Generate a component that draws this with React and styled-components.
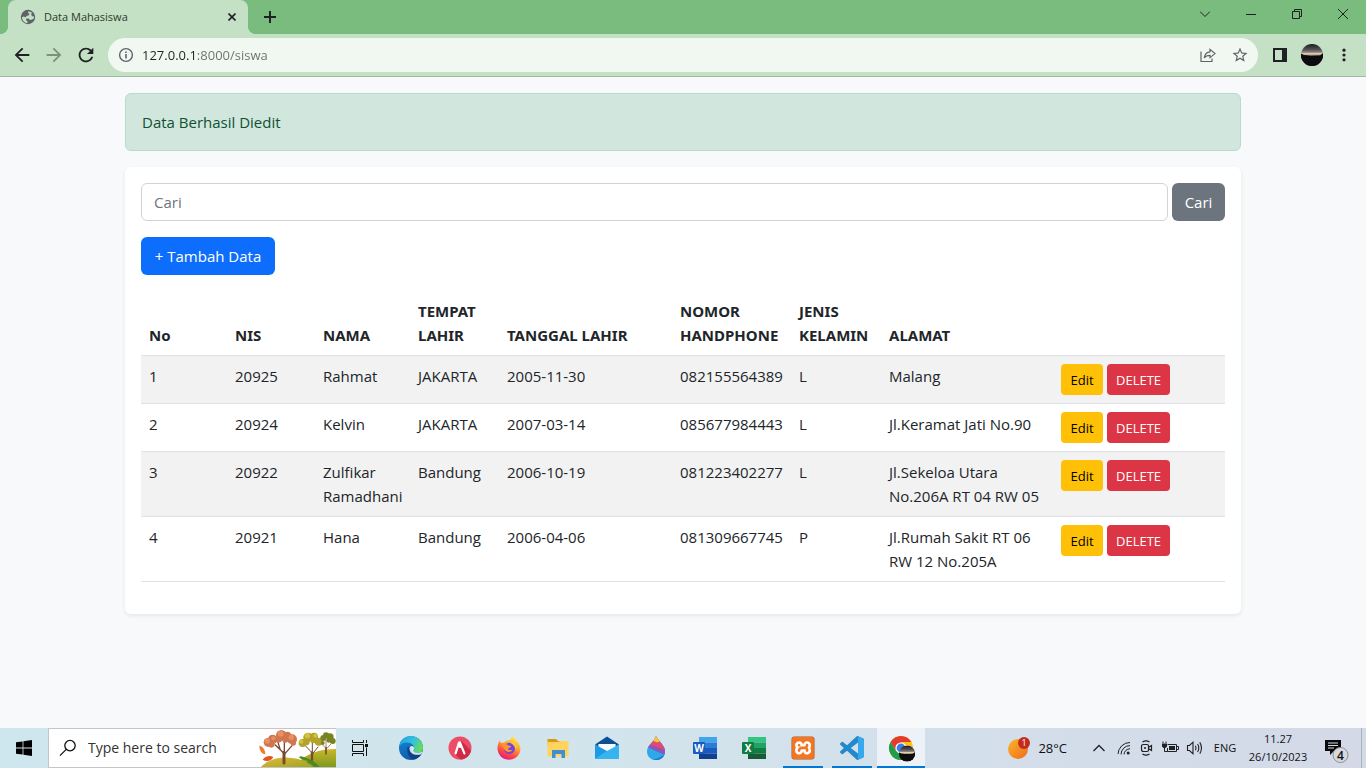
import React from "react";
import styled, { createGlobalStyle } from "styled-components";
import { SiXampp } from "react-icons/si";

const GlobalStyle = createGlobalStyle`
  *, *::before, *::after { box-sizing: border-box; }
  body {
    margin: 0;
    background: #f8f9fa;
    color: #212529;
    font-family: "Open Sans", "Noto Sans", sans-serif;
    font-size: 15px;
    line-height: 24px;
  }
  button, input { font: inherit; color: inherit; }
  button { cursor: pointer; }
  svg { display: block; flex: none; }
`;

/* ---------- shell ---------- */

const Screen = styled.div`
  display: flex;
  flex-direction: column;
  min-height: 100vh;
`;

const IconButton = styled.button`
  display: flex;
  align-items: center;
  justify-content: center;
  flex: none;
  width: ${(p) => p.$width || 32}px;
  height: ${(p) => p.$height || 34}px;
  padding: 0;
  border: 0;
  background: transparent;
  color: ${(p) => p.$color || "#202124"};
`;

/* ---------- browser frame ---------- */

const TabStrip = styled.div`
  display: flex;
  height: 34px;
  padding-left: 8px;
  background: #7abc7d;
`;

const Tab = styled.div`
  position: relative;
  display: flex;
  align-items: center;
  width: 240px;
  padding: 0 4px 0 12px;
  gap: 8px;
  border-radius: 8px 8px 0 0;
  background: #c5e1c5;
  color: #2b3a2c;
  font-size: 11px;
  line-height: 16px;

  &::before, &::after {
    content: "";
    position: absolute;
    bottom: 0;
    width: 8px;
    height: 8px;
  }
  &::before {
    left: -8px;
    background: radial-gradient(circle at 0 0, transparent 8px, #c5e1c5 8px);
  }
  &::after {
    right: -8px;
    background: radial-gradient(circle at 100% 0, transparent 8px, #c5e1c5 8px);
  }
`;

const TabTitle = styled.span`
  flex: 1;
`;

const NewTab = styled.div`
  flex: 1;
  padding-left: 8px;
`;

const Toolbar = styled.div`
  display: flex;
  align-items: center;
  height: 43px;
  padding: 0 6px;
  border-bottom: 1px solid #a3b9a4;
  background: #c5e1c5;
`;

const AddressBar = styled.div`
  display: flex;
  align-items: center;
  flex: 1;
  height: 34px;
  margin: 0 6px;
  padding: 0 2px;
  border-radius: 17px;
  background: #f1f8f2;
`;

const AddressInput = styled.input`
  flex: 1;
  min-width: 0;
  height: 24px;
  padding: 0;
  border: 0;
  outline: 0;
  font-size: 13px;
  color: #202124;
  background: linear-gradient(90deg, #202124 54px, #6a706c 54px);
  background-clip: text;
  -webkit-text-fill-color: transparent;
`;

/* ---------- page content ---------- */

const Content = styled.main`
  flex: 1;
  width: 100%;
  max-width: 1140px;
  margin: 0 auto;
  padding: 16px 12px;
`;

const Alert = styled.div`
  margin-bottom: 16px;
  padding: 16px;
  border: 1px solid #badbcc;
  border-radius: 6px;
  background: #d1e7dd;
  color: #0f5132;
`;

const Card = styled.section`
  padding: 16px;
  border-radius: 6px;
  background: #fff;
  box-shadow: 0 2px 4px rgba(0, 0, 0, 0.075);
`;

const SearchForm = styled.form`
  display: flex;
  gap: 4px;
  margin-bottom: 16px;
`;

const SearchInput = styled.input`
  flex: 1;
  min-width: 0;
  height: 38px;
  padding: 6px 12px;
  border: 1px solid #ced4da;
  border-radius: 6px;
  background: #fff;
  outline: 0;
  &::placeholder { color: #6c757d; opacity: 1; }
`;

const tones = {
  primary: ["#0d6efd", "#fff"],
  secondary: ["#6c757d", "#fff"],
  warning: ["#ffc107", "#000"],
  danger: ["#dc3545", "#fff"],
};

const Button = styled.button`
  width: ${(p) => p.$width}px;
  height: ${(p) => (p.$small ? 31 : 38)}px;
  padding: 0;
  border: 0;
  border-radius: ${(p) => (p.$small ? 4 : 6)}px;
  background: ${(p) => tones[p.$tone][0]};
  color: ${(p) => tones[p.$tone][1]};
  font-size: ${(p) => (p.$small ? 13 : 15)}px;
  white-space: nowrap;
`;

const Table = styled.table`
  width: 100%;
  margin: 16px 0;
  border-collapse: separate;
  border-spacing: 0;
  table-layout: fixed;
`;

const HeadCell = styled.th`
  padding: 8px;
  border-bottom: 1px solid #dee2e6;
  text-align: left;
  vertical-align: bottom;
  font-family: "Noto Sans", "Open Sans", sans-serif;
  font-weight: 700;
`;

const Row = styled.tr`
  &:nth-child(odd) { background: #f2f2f2; }
`;

const Cell = styled.td`
  padding: 8px;
  border-bottom: 1px solid #dee2e6;
  vertical-align: top;
`;

const Actions = styled.div`
  display: flex;
  gap: 4px;
`;

/* ---------- task bar ---------- */

const TaskBar = styled.footer`
  display: flex;
  align-items: center;
  height: 40px;
  background: linear-gradient(90deg, #cee6ee 0%, #d2e4ec 45%, #d3deea 75%, #d4d9e7 100%);
  color: #111;
  font-size: 12px;
  line-height: 18px;
`;

const TaskSearch = styled.label`
  display: flex;
  align-items: center;
  width: 288px;
  height: 40px;
  padding-left: 10px;
  border: 1px solid #c3c5c6;
  border-right: 0;
  background: #fff;
`;

const TaskSearchInput = styled.input`
  flex: 1;
  min-width: 0;
  padding: 0 0 0 11px;
  border: 0;
  outline: 0;
  background: transparent;
  font-size: 14px;
  &::placeholder { color: #333; opacity: 1; }
`;

const AppList = styled.div`
  display: flex;
  flex: 1;
  gap: 1px;
  padding-left: 3px;
`;

const AppButton = styled.button`
  display: flex;
  align-items: center;
  justify-content: center;
  width: 48px;
  height: 40px;
  padding: 0;
  border: 0;
  background:
    linear-gradient(#0078d7, #0078d7) bottom / ${(p) => ({ open: "40px 2px", active: "48px 2px" })[p.$state] || "0 0"} no-repeat,
    ${(p) => (p.$state === "active" ? "#edf2f8" : "transparent")};
`;

const Weather = styled.button`
  display: flex;
  align-items: center;
  gap: 8px;
  margin-right: 20px;
  padding: 0;
  border: 0;
  background: transparent;
  font-size: 13px;
`;

const Language = styled.button`
  width: 36px;
  height: 40px;
  padding: 0;
  border: 0;
  background: transparent;
  font-size: 11px;
`;

const Clock = styled.time`
  width: 70px;
  font-size: 11px;
  text-align: center;
`;

const ShowDesktop = styled.button`
  width: 5px;
  height: 40px;
  margin-left: 4px;
  padding: 0;
  border: 0;
  border-left: 1px solid #a9b4c3;
  background: transparent;
`;

/* ---------- icons ---------- */

const Glyph = ({ size = 24, box = 24, h, children, ...rest }) => (
  <svg width={size} height={h || size} viewBox={`0 0 ${box} ${h ? (box * h) / size : box}`} fill="currentColor" aria-hidden="true" {...rest}>
    {children}
  </svg>
);

const line = { fill: "none", stroke: "currentColor", strokeWidth: 1 };

const GlobeIcon = () => (
  <Glyph size={16} box={16} color="#5f6368">
    <circle cx="8" cy="8" r="7.2" />
    <path fill="#c5e1c5" d="M8.6 2.2 8 3.8 9.6 5 8.4 6.6 6.6 7 5.8 8.2 3.4 7.6 2 8.4C2 11.2 4.4 14 7.4 14L7.6 12.4 6 11 6.4 9.4 8.6 9.6 10 11 12 10.6 13.8 9.4 14.1 7.6 12 7.2 11.2 5.6 11.8 3.4Z" />
  </Glyph>
);

const AutumnArt = () => (
  <svg width="78" height="38" viewBox="0 0 234 114" aria-hidden="true">
    <defs>
      <linearGradient id="hill" x1="0" y1="0" x2="0" y2="1">
        <stop offset="0" stopColor="#c9b72a" />
        <stop offset="1" stopColor="#7d9a1e" />
      </linearGradient>
      <linearGradient id="hillFront" x1="0" y1="0" x2="1" y2="1">
        <stop offset="0" stopColor="#e6b73a" />
        <stop offset="1" stopColor="#9aa624" />
      </linearGradient>
    </defs>
    <path fill="url(#hill)" d="M110 114C136 76 180 60 234 60V114Z" />
    <path fill="#4e8a1d" d="M150 96C120 88 120 84 128 82 150 86 176 100 184 114H140Z" />
    <path fill="url(#hillFront)" d="M8 114C30 92 62 84 92 86 130 88 150 100 168 114Z" />
    <g fill="none" stroke="#7b4a2e" strokeLinecap="round">
      <path strokeWidth="9" d="M78 102V70" />
      <path strokeWidth="4" d="M77 72 52 48M79 70V32M81 74 102 50M66 60 60 40" />
      <path strokeWidth="7" d="M162 92V70" />
      <path strokeWidth="3" d="M161 70 142 50M163 70V36M164 74 180 54" />
      <path strokeWidth="5" d="M204 74V56" />
      <path strokeWidth="2" d="M204 58 192 46M204 58V32M205 60 218 46" />
    </g>
    <g fill="#d07650">
      <circle cx="30" cy="40" r="13" /><circle cx="44" cy="31" r="14" /><circle cx="70" cy="19" r="16" />
      <circle cx="88" cy="21" r="13" /><circle cx="102" cy="31" r="15" /><circle cx="62" cy="31" r="10" />
      <circle cx="82" cy="32" r="9" /><circle cx="40" cy="46" r="10" /><circle cx="106" cy="42" r="8" />
    </g>
    <g fill="#e88f64">
      <circle cx="68" cy="14" r="9" /><circle cx="28" cy="36" r="8" /><circle cx="100" cy="25" r="8" /><circle cx="46" cy="28" r="6" />
    </g>
    <g fill="#b3a32b">
      <circle cx="134" cy="42" r="12" /><circle cx="150" cy="25" r="14" /><circle cx="168" cy="23" r="12" />
      <circle cx="182" cy="38" r="12" /><circle cx="166" cy="34" r="9" /><circle cx="144" cy="38" r="11" />
    </g>
    <g fill="#d2c23f">
      <circle cx="148" cy="20" r="8" /><circle cx="130" cy="38" r="6" /><circle cx="172" cy="20" r="6" />
    </g>
    <g fill="#788322">
      <circle cx="196" cy="27" r="9" /><circle cx="204" cy="19" r="9" /><circle cx="216" cy="24" r="11" />
      <circle cx="224" cy="36" r="9" /><circle cx="194" cy="42" r="6" /><circle cx="212" cy="34" r="7" />
    </g>
    <path fill="#ef7b2d" d="M4 50C14 52 22 62 22 76 10 74 4 64 4 50Z" />
    <path fill="#e2541f" d="M14 92C22 80 36 78 46 84 40 96 26 100 14 92Z" />
  </svg>
);

const EdgeIcon = () => (
  <Glyph>
    <defs>
      <linearGradient id="edgeTop" x1="0" y1="0.3" x2="1" y2="0.7">
        <stop offset="0" stopColor="#1fa2de" />
        <stop offset="0.5" stopColor="#35c1dc" />
        <stop offset="1" stopColor="#6be04c" />
      </linearGradient>
      <linearGradient id="edgeLow" x1="0" y1="0" x2="0.3" y2="1">
        <stop offset="0" stopColor="#1488d8" />
        <stop offset="1" stopColor="#0f5cb0" />
      </linearGradient>
    </defs>
    <circle cx="12" cy="12" r="12" fill="url(#edgeLow)" />
    <path fill="#123f86" d="M9 10C7 15 9 21 14 23.6 18 23.2 21 20.6 22.4 18 18 20 12 18.6 10.6 13.4Z" />
    <path fill="url(#edgeTop)" d="M0 11C.6 4.4 6 0 12 0 19 0 24 5.4 24 11.4 24 15 21.4 16.8 18.6 16.8 16 16.8 14 15.8 14.4 14.8 15.4 13.8 15.4 13 15.4 12.2 15 9.4 12.4 6.6 8 6.6 4 6.6 1.2 8.6 0 11Z" />
    <path fill="#d0e6ed" d="M10.6 13.4C10.4 11.2 11.4 10.2 12.8 10 14.6 10.2 15.4 11.4 15.4 12.4 15.2 13.8 14.4 14 14.4 14.8 14.4 15.8 16.4 16.8 18.6 16.8 20.8 16.8 22.4 16 23.2 15 23 16.8 22.6 17.4 22 18.2 17.4 19.8 11.4 18.4 10.6 13.4Z" />
  </Glyph>
);

const PeakIcon = () => (
  <Glyph>
    <circle cx="12" cy="12" r="11.5" fill="#ee4b64" />
    <path fill="#d02a49" d="M13 4.5 23 14.8C21.8 19.6 17.8 23.2 12.6 23.5L7 18Z" />
    <path fill="none" stroke="#fff" strokeWidth="2.2" strokeLinecap="round" strokeLinejoin="round" d="M7.6 17.4 11 6.6H12L16.4 17.4M12 6.4V11" />
  </Glyph>
);

const FirefoxIcon = () => (
  <Glyph>
    <defs>
      <linearGradient id="fox" x1="0.8" y1="0" x2="0.3" y2="1">
        <stop offset="0" stopColor="#fff44f" />
        <stop offset="0.4" stopColor="#ffa436" />
        <stop offset="0.7" stopColor="#ff4f3c" />
        <stop offset="1" stopColor="#e31587" />
      </linearGradient>
    </defs>
    <path fill="url(#fox)" d="M2.4 4.4 4 7 7.2 6.4C9.2 4.6 12 4.2 13.2 4 13.6 2.2 14.6 .8 16.2 .2 17 3 20 4.2 22 7.4 24.6 12.6 23.4 17.4 20 20.8 15 25 8 24.4 3.8 20.4 .4 17 -.4 11.6 1.4 7.6Z" />
    <circle cx="12.4" cy="12.4" r="5.6" fill="#7544d8" />
    <path fill="#ff9430" d="M4 8C7 6.6 10 8 11.6 9.6 13 10 14.2 9.8 14.2 10.4 13.6 11.8 11.6 11.6 11 13 11.4 14.6 14 14 15.6 13.8 13.4 17.2 8.2 16.4 6.8 12.6Z" />
    <path fill="#ffc83a" d="M14.4 4.2C18.4 6.4 20.2 10 19 13.8 18.4 10.8 16.6 8.8 13.8 7Z" />
  </Glyph>
);

const FolderIcon = () => (
  <Glyph size={22} box={22}>
    <path fill="#d79b12" d="M.5 2H9L11 4H21V8H.5Z" />
    <path fill="#ffd35d" d="M.5 5H11L13 4H21.5V19.5H.5Z" />
    <path fill="#3f8fd0" d="M5 13H18V21H14.5V17H8.5V21H5Z" />
  </Glyph>
);

const MailIcon = () => (
  <Glyph>
    <path fill="#0c4f95" d="M0 8.4 12 .6 24 8.4 12 16Z" />
    <path fill="#f7fafc" d="M3.4 8H20.6V12L12 18 3.4 12Z" />
    <path fill="#1e9ae4" d="M0 8.4 12 15 24 22.8H0Z" />
    <path fill="#36b4f0" d="M24 8.4V22.8L0 22.8 12 15Z" />
  </Glyph>
);

const DropIcon = () => (
  <Glyph>
    <defs>
      <clipPath id="drop"><path d="M12 0C14.4 5.4 21 9 21 15.4 21 20.4 17 24 12 24S3 20.4 3 15.4C3 9 10 6.4 12 0Z" /></clipPath>
    </defs>
    <g clipPath="url(#drop)">
      <rect width="24" height="24" fill="#2da8e8" />
      <path fill="#1b78d4" d="M8 24C14 23 20 20 22 16V24Z" />
      <path fill="#8a56b8" d="M0 10C8 12 12 16 22 19V9L12 6Z" />
      <path fill="#e04a72" d="M0 0H24V13C18 15 13 9 5 9.6Z" />
      <path fill="#f8c62e" d="M10 0H15L15.6 5.6C13.4 7.4 11.4 5.4 9 5Z" />
    </g>
  </Glyph>
);

const OfficeIcon = ({ letter, shades, badge }) => (
  <Glyph>
    {shades.map((c, i) => (
      <rect key={c} x="6" y={1 + i * 5.5} width="18" height="5.5" fill={c} />
    ))}
    <rect x="0" y="6" width="12" height="12" rx="1" fill={badge} />
    <text x="6" y="15.6" textAnchor="middle" fontSize="10" fontWeight="700" fill="#fff">{letter}</text>
  </Glyph>
);

const XamppTile = () => (
  <Glyph>
    <rect x="0.5" y="0.5" width="23" height="23" rx="3" fill="#a8562a" />
    <rect x="2" y="2" width="20" height="20" rx="2" fill="#fff" />
    <SiXampp x="1" y="1" size={22} color="#f37623" />
  </Glyph>
);

const CodeIcon = () => (
  <Glyph color="#2489ca">
    <path d="M23.15 2.587L18.21.21a1.494 1.494 0 0 0-1.705.29l-9.46 8.63-4.12-3.128a.999.999 0 0 0-1.276.057L.327 7.261A1 1 0 0 0 .326 8.74L3.899 12 .326 15.26a1 1 0 0 0 .001 1.479L1.65 17.94a.999.999 0 0 0 1.276.057l4.12-3.128 9.46 8.63a1.492 1.492 0 0 0 1.704.29l4.942-2.377A1.5 1.5 0 0 0 24 20.06V3.939a1.5 1.5 0 0 0-.85-1.352zm-5.146 14.861L10.826 12l7.178-5.448v10.896z" />
    <path fill="#35a8ee" d="M18 .2 23.2 2.6Q24 3 24 4V20Q24 21 23.2 21.4L18 23.8Z" />
  </Glyph>
);

const Portrait = ({ id, ...rest }) => (
  <g {...rest}>
    <defs>
      <clipPath id={id}><circle cx="11" cy="11" r="11" /></clipPath>
      <linearGradient id={`${id}Sky`} x1="0" y1="0" x2="0" y2="1">
        <stop offset="0" stopColor="#1c1b20" />
        <stop offset="0.26" stopColor="#55525a" />
        <stop offset="0.38" stopColor="#8f8782" />
        <stop offset="0.44" stopColor="#e6d5bd" />
        <stop offset="0.5" stopColor="#b99c7c" />
        <stop offset="0.56" stopColor="#0c0b0d" />
      </linearGradient>
    </defs>
    <g clipPath={`url(#${id})`}>
      <rect width="22" height="22" fill={`url(#${id}Sky)`} />
      <path fill="#0c0b0d" d="M0 9.4 3 11 10 12 19 11.4 22 9V22H0Z" />
    </g>
  </g>
);

const ChromeIcon = () => (
  <Glyph size={28} box={28}>
    <g transform="translate(2 2)">
      <circle cx="12" cy="12" r="12" fill="#fbc116" />
      <path fill="#e33b2e" d="M1.6 6A12 12 0 0 1 22.4 6H12L7 15Z" />
      <path fill="#1e9e4a" d="M1.6 6A12 12 0 0 0 12 24L17.2 15H6.8Z" />
      <circle cx="12" cy="12" r="5.6" fill="#fff" />
      <circle cx="12" cy="12" r="4.4" fill="#3b7ded" />
    </g>
    <Portrait id="badgeFace" transform="translate(12 11.5) scale(.73)" />
  </Glyph>
);

const WeatherIcon = () => (
  <Glyph size={22} box={22}>
    <defs>
      <linearGradient id="sun" x1="0" y1="0" x2="1" y2="1">
        <stop offset="0" stopColor="#fbb62a" />
        <stop offset="1" stopColor="#ee6a1c" />
      </linearGradient>
    </defs>
    <circle cx="10" cy="12" r="10" fill="url(#sun)" />
    <circle cx="16" cy="6" r="6" fill="#c42b1c" />
    <text x="16" y="9" textAnchor="middle" fontSize="9" fill="#fff">1</text>
  </Glyph>
);

/* ---------- data ---------- */

const columns = [
  { label: "No", width: 86 },
  { label: "NIS", width: 88 },
  { label: "NAMA", width: 95 },
  { label: "TEMPAT LAHIR", width: 89 },
  { label: "TANGGAL LAHIR", width: 173 },
  { label: "NOMOR HANDPHONE", width: 119 },
  { label: "JENIS KELAMIN", width: 90 },
  { label: "ALAMAT", width: 172 },
  { label: "", width: 172 },
];

const students = [
  ["1", "20925", "Rahmat", "JAKARTA", "2005-11-30", "082155564389", "L", "Malang"],
  ["2", "20924", "Kelvin", "JAKARTA", "2007-03-14", "085677984443", "L", "Jl.Keramat Jati No.90"],
  ["3", "20922", "Zulfikar Ramadhani", "Bandung", "2006-10-19", "081223402277", "L", "Jl.Sekeloa Utara No.206A RT 04 RW 05"],
  ["4", "20921", "Hana", "Bandung", "2006-04-06", "081309667745", "P", "Jl.Rumah Sakit RT 06 RW 12 No.205A"],
];

const apps = [
  { name: "Edge", icon: <EdgeIcon /> },
  { name: "Antares", icon: <PeakIcon /> },
  { name: "Firefox", icon: <FirefoxIcon /> },
  { name: "File Explorer", icon: <FolderIcon /> },
  { name: "Mail", icon: <MailIcon /> },
  { name: "Paint 3D", icon: <DropIcon /> },
  { name: "Word", icon: <OfficeIcon letter="W" badge="#185abd" shades={["#41a5ee", "#2b7cd3", "#185abe", "#103f91"]} /> },
  { name: "Excel", icon: <OfficeIcon letter="X" badge="#107c41" shades={["#33c481", "#21a366", "#107c42", "#185c37"]} /> },
  { name: "XAMPP", icon: <XamppTile />, state: "open" },
  { name: "Visual Studio Code", icon: <CodeIcon />, state: "open" },
  { name: "Chrome", icon: <ChromeIcon />, state: "active" },
];

/* ---------- sections ---------- */

const BrowserFrame = () => (
  <header>
    <TabStrip>
      <Tab>
        <GlobeIcon />
        <TabTitle>Data Mahasiswa</TabTitle>
        <IconButton $width={24} $height={24} aria-label="Close tab">
          <Glyph size={8} box={8}><path d="M.5.5 7.5 7.5M7.5.5.5 7.5" {...line} strokeWidth="1.6" /></Glyph>
        </IconButton>
      </Tab>
      <NewTab>
        <IconButton $width={28} aria-label="New tab">
          <Glyph size={12} box={12}><path d="M6 0V12M0 6H12" {...line} strokeWidth="2" /></Glyph>
        </IconButton>
      </NewTab>
      <IconButton $width={46} $height={28} aria-label="Search tabs">
        <Glyph size={10} box={10}><path d="M0 2.5 5 7.5 10 2.5" {...line} /></Glyph>
      </IconButton>
      <IconButton $width={46} $height={28} aria-label="Minimize">
        <Glyph size={10} box={10}><path d="M0 5.5H10" {...line} /></Glyph>
      </IconButton>
      <IconButton $width={46} $height={28} aria-label="Restore">
        <Glyph size={10} box={10}><path d="M.5 2.5H7.5V9.5H.5ZM2.5 2.5V.5H9.5V7.5H7.5" {...line} /></Glyph>
      </IconButton>
      <IconButton $width={46} $height={28} aria-label="Close window">
        <Glyph size={10} box={10}><path d="M0 0 10 10M10 0 0 10" {...line} /></Glyph>
      </IconButton>
    </TabStrip>
    <Toolbar>
      <IconButton aria-label="Back">
        <Glyph size={22}><path d="M20 11H7.83l5.59-5.59L12 4l-8 8 8 8 1.41-1.41L7.83 13H20v-2z" /></Glyph>
      </IconButton>
      <IconButton $color="#7d907e" aria-label="Forward">
        <Glyph size={22}><path d="M4 11H16.17L10.58 5.41 12 4l8 8-8 8-1.41-1.41L16.17 13H4v-2z" /></Glyph>
      </IconButton>
      <IconButton aria-label="Reload">
        <Glyph size={22}><path d="M17.65 6.35C16.2 4.9 14.21 4 12 4c-4.42 0-7.99 3.58-7.99 8s3.57 8 7.99 8c3.73 0 6.84-2.55 7.73-6h-2.08c-.82 2.33-3.04 4-5.65 4-3.31 0-6-2.69-6-6s2.69-6 6-6c1.66 0 3.14.69 4.22 1.78L13 11h7V4l-2.35 2.35z" /></Glyph>
      </IconButton>
      <AddressBar>
        <IconButton $color="#5f6368" aria-label="Site information">
          <Glyph size={16} box={16}>
            <circle cx="8" cy="8" r="6.4" {...line} strokeWidth="1.4" />
            <path d="M7.2 7H8.8V11.5H7.2ZM7.2 4.4H8.8V6H7.2Z" />
          </Glyph>
        </IconButton>
        <AddressInput aria-label="Address" defaultValue="127.0.0.1:8000/siswa" />
        <IconButton $color="#5f6368" aria-label="Share">
          <Glyph size={16} box={16}>
            <path d="M1 4.5V14.5H12V11.5" {...line} strokeWidth="1.2" />
            <path d="M10 2.4 15 6.6 10 10.6V8.4C7.4 8.4 5.6 9 4.2 11 4.8 7.4 6.8 5 10 4.8Z" {...line} strokeWidth="1.2" />
          </Glyph>
        </IconButton>
        <IconButton $color="#5f6368" aria-label="Bookmark this page">
          <Glyph size={18}><path d="M22 9.24l-7.19-.62L12 2 9.19 8.63 2 9.24l5.46 4.73L5.82 21 12 17.27 18.18 21l-1.63-7.03L22 9.24zM12 15.4l-3.76 2.27 1-4.28-3.32-2.88 4.38-.38L12 6.1l1.71 4.04 4.38.38-3.32 2.88 1 4.28L12 15.4z" /></Glyph>
        </IconButton>
      </AddressBar>
      <IconButton aria-label="Side panel">
        <Glyph size={14} box={14}><path fillRule="evenodd" d="M0 0H14V14H0ZM2 2V12H9V2Z" /></Glyph>
      </IconButton>
      <IconButton aria-label="Profile">
        <Glyph size={22} box={22}><Portrait id="profileFace" /></Glyph>
      </IconButton>
      <IconButton aria-label="Menu">
        <Glyph size={14} box={14}><circle cx="7" cy="2.2" r="1.6" /><circle cx="7" cy="7" r="1.6" /><circle cx="7" cy="11.8" r="1.6" /></Glyph>
      </IconButton>
    </Toolbar>
  </header>
);

const StudentTable = () => (
  <Table>
    <colgroup>
      {columns.map((c) => <col key={c.label} width={c.width} />)}
    </colgroup>
    <thead>
      <tr>
        {columns.map((c) => <HeadCell key={c.label} scope="col">{c.label}</HeadCell>)}
      </tr>
    </thead>
    <tbody>
      {students.map((s) => (
        <Row key={s[0]}>
          {s.map((v, i) => <Cell key={i}>{v}</Cell>)}
          <Cell>
            <Actions>
              <Button type="button" $small $tone="warning" $width={42}>Edit</Button>
              <Button type="button" $small $tone="danger" $width={63}>DELETE</Button>
            </Actions>
          </Cell>
        </Row>
      ))}
    </tbody>
  </Table>
);

const SystemTaskBar = () => (
  <TaskBar>
    <IconButton $width={48} $height={40} $color="#000" aria-label="Start">
      <Glyph size={16} box={16}><path d="M0 2.3 6.6 1.4V7.6H0ZM7.4 1.3 16 0V7.6H7.4ZM0 8.4H6.6V14.6L0 13.7ZM7.4 8.4H16V16L7.4 14.7Z" /></Glyph>
    </IconButton>
    <TaskSearch>
      <Glyph size={18} box={18}>
        <circle cx="11" cy="6.6" r="5.2" {...line} strokeWidth="1.3" />
        <path d="M7.2 10.4 1 16.6" {...line} strokeWidth="1.3" />
      </Glyph>
      <TaskSearchInput placeholder="Type here to search" aria-label="Search" />
      <AutumnArt />
    </TaskSearch>
    <IconButton $width={48} $height={40} $color="#111" aria-label="Task view">
      <Glyph size={16} box={16}>
        <path d="M.5 0V2.5H11.5V0M.5 16V13.5H11.5V16M.5 4.5H11.5V11.5H.5ZM14.5 0V3M14.5 7.5V16" {...line} />
        <rect x="13" y="4" width="3" height="3" />
      </Glyph>
    </IconButton>
    <AppList>
      {apps.map((a) => (
        <AppButton key={a.name} $state={a.state} aria-label={a.name}>{a.icon}</AppButton>
      ))}
    </AppList>
    <Weather>
      <WeatherIcon />
      28°C
    </Weather>
    <IconButton $width={24} aria-label="Show hidden icons">
      <Glyph size={12} box={12}><path d="M.5 9 6 3.5 11.5 9" {...line} strokeWidth="1.3" /></Glyph>
    </IconButton>
    <IconButton $width={26} aria-label="Network">
      <Glyph size={14} box={14}>
        <path d="M1 13A12 12 0 0 1 13 1.5M4 13.4A9 9 0 0 1 13 4.6M7 13.4A6 6 0 0 1 13 7.8" {...line} />
        <circle cx="11.2" cy="12" r="1.5" />
      </Glyph>
    </IconButton>
    <IconButton $width={20} aria-label="Camera">
      <Glyph size={14} box={14} h={16}>
        <path d="M2.5 2Q6 -.4 9.5 2M2.5 14Q6 16.4 9.5 14" {...line} strokeWidth="1.2" />
        <path d="M3.5 4.5H7Q8.5 4.5 8.5 6V10Q8.5 11.5 7 11.5H3.5Q1.5 11.5 1.5 9.5V6.5Q1.5 4.5 3.5 4.5ZM8.5 7.2 11.5 5.6V10.4L8.5 8.8" {...line} strokeWidth="1.2" />
        <circle cx="5" cy="8" r="1" />
      </Glyph>
    </IconButton>
    <IconButton $width={26} aria-label="Battery">
      <Glyph size={18} box={18}>
        <path d="M6.5 5.5H15.5V12.5H6.5V9M16 7.5H17.5V10.5H16" {...line} />
        <rect x="8" y="7" width="6" height="4" />
        <path d="M1 4.5H6V7.5L4.5 9H2.5L1 7.5ZM1.5 2.5V5H2.5V2.5ZM4.5 2.5V5H5.5V2.5Z" />
        <path d="M3.5 8V12.5H6.5" {...line} />
      </Glyph>
    </IconButton>
    <IconButton $width={24} aria-label="Volume">
      <Glyph size={18} box={18}>
        <path d="M1.5 6.5H3.5L7 3.2V14.8L3.5 11.5H1.5ZM9.4 6.8Q10.8 9 9.4 11.2M11.6 5Q14 9 11.6 13M13.8 3.4Q17.2 9 13.8 14.6" {...line} strokeWidth="1.1" />
      </Glyph>
    </IconButton>
    <Language>ENG</Language>
    <Clock>11.27<br />26/10/2023</Clock>
    <IconButton $width={44} $height={40} $color="#0a0a0a" aria-label="Notifications">
      <Glyph size={30} box={30}>
        <path fillRule="evenodd" d="M5 7H21V18H14L10 22V18H5ZM8 9.5V10.5H18V9.5ZM8 12V13H18V12ZM8 14.5V15.5H14V14.5Z" />
        <circle cx="20.5" cy="22" r="7.5" fill="#d6d9dd" stroke="#8b9199" />
        <text x="20.5" y="26.5" textAnchor="middle" fontSize="12" fontWeight="600" fill="#111">4</text>
      </Glyph>
    </IconButton>
    <ShowDesktop aria-label="Show desktop" />
  </TaskBar>
);

export default function App() {
  return (
    <Screen>
      <GlobalStyle />
      <BrowserFrame />
      <Content>
        <Alert role="status">Data Berhasil Diedit</Alert>
        <Card>
          <SearchForm onSubmit={(e) => e.preventDefault()}>
            <SearchInput type="search" placeholder="Cari" aria-label="Cari" />
            <Button type="submit" $tone="secondary" $width={53}>Cari</Button>
          </SearchForm>
          <Button type="button" $tone="primary" $width={134}>+ Tambah Data</Button>
          <StudentTable />
        </Card>
      </Content>
      <SystemTaskBar />
    </Screen>
  );
}
